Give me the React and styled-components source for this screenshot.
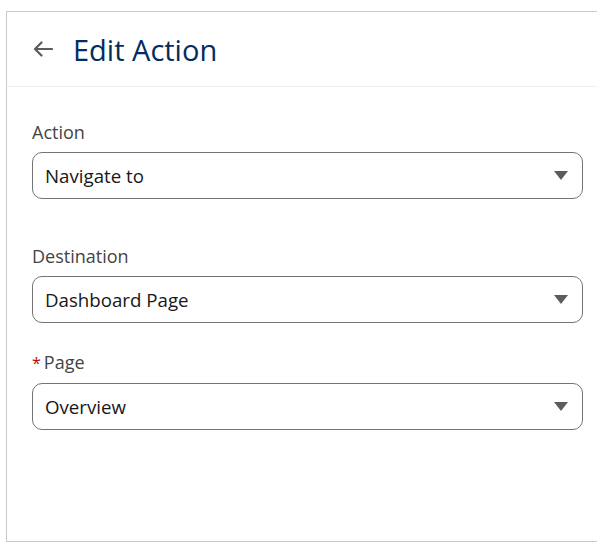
import React from 'react';
import styled, { createGlobalStyle } from 'styled-components';

const GlobalStyle = createGlobalStyle`
  html, body {
    margin: 0;
    padding: 0;
    background: #ffffff;
    overflow: hidden;
  }
  body {
    font-family: "Open Sans", "Noto Sans", Arial, sans-serif;
  }
`;

const Page = styled.div`
  width: 597px;
  height: 543px;
  overflow: hidden;
  padding: 11px 0 0 6px;
  box-sizing: border-box;
`;

const Panel = styled.section`
  width: 620px;
  height: 529px;
  border: 1px solid #c9c9c9;
  background: #fff;
  display: flex;
  flex-direction: column;
`;

const Header = styled.header`
  height: 74px;
  display: flex;
  align-items: center;
  gap: 19px;
  padding-left: 25px;
  border-bottom: 1px solid #f0f0f0;
`;

const BackButton = styled.button`
  border: 0;
  background: none;
  padding: 0;
  width: 22px;
  height: 22px;
  display: flex;
  align-items: center;
  justify-content: center;
  cursor: pointer;
  color: #5c5c5c;
`;

const Title = styled.h1`
  margin: 0;
  font-size: 29px;
  font-weight: 400;
  color: #032d60;
`;

const Body = styled.div`
  padding: 33px 0 0 25px;
  width: 551px;
  display: flex;
  flex-direction: column;
`;

const Field = styled.div`
  display: flex;
  flex-direction: column;
  margin-bottom: ${p => p.$gap}px;
`;

const Label = styled.label`
  font-size: 18px;
  color: #444444;
  line-height: 24px;
  margin-bottom: 8px;
`;

const Required = styled.abbr`
  color: #ba0517;
  text-decoration: none;
  margin-right: 3px;
  font-size: 16px;
`;

const Select = styled.div`
  height: 45px;
  border: 1px solid #747474;
  border-radius: 10px;
  display: flex;
  align-items: center;
  justify-content: space-between;
  padding: 0 14px 0 12px;
  font-size: 18.7px;
  color: #181818;
`;

const Caret = styled.span`
  width: 0;
  height: 0;
  border-left: 7px solid transparent;
  border-right: 7px solid transparent;
  border-top: 9px solid #5c5c5c;
`;

const fields = [
  { label: 'Action', value: 'Navigate to', gap: 45 },
  { label: 'Destination', value: 'Dashboard Page', gap: 27 },
  { label: 'Page', value: 'Overview', gap: 0, required: true },
];

export default function App() {
  return (
    <>
      <GlobalStyle />
      <Page>
        <Panel>
          <Header>
            <BackButton aria-label="Back">
              <svg width="20" height="16" viewBox="0 0 20 16" fill="none">
                <path d="M19 8H2M8.5 1.5L2 8l6.5 6.5" stroke="currentColor" strokeWidth="2.2" strokeLinecap="round" strokeLinejoin="round" />
              </svg>
            </BackButton>
            <Title>Edit Action</Title>
          </Header>
          <Body>
            {fields.map(f => (
              <Field key={f.label} $gap={f.gap}>
                <Label>
                  {f.required && <Required title="required">*</Required>}
                  {f.label}
                </Label>
                <Select>
                  <span>{f.value}</span>
                  <Caret />
                </Select>
              </Field>
            ))}
          </Body>
        </Panel>
      </Page>
    </>
  );
}
